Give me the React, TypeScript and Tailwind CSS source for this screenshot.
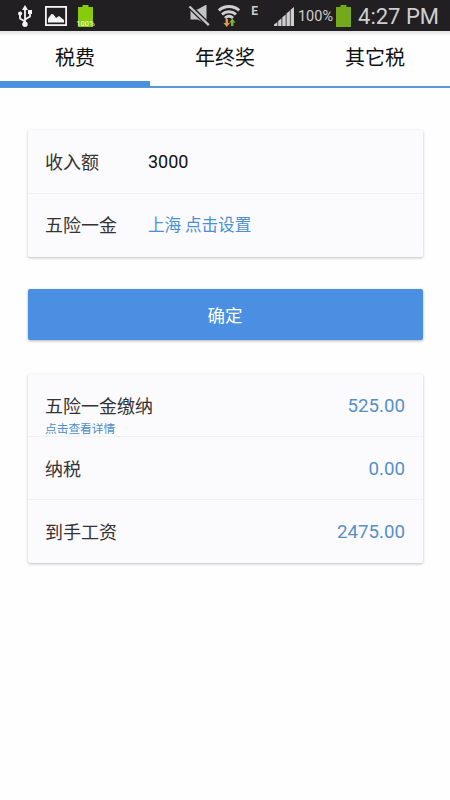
import { useState } from "react";
import clsx from "clsx";

// ─── Status bar icons ─────────────────────────────────────────────────────────

function UsbIcon() {
  return (
    <svg width="14" height="22" viewBox="0 0 14 22" fill="none" stroke="#f4f4f4" strokeWidth="1.8" aria-hidden="true">
      <path d="M7 4V18M7 16.5L2 13.5V9.5M7 14.5L12 11.5V8" />
      <path d="M7 0L10 5H4Z" fill="#f4f4f4" stroke="none" />
      <circle cx="2.1" cy="8.5" r="2.1" fill="#f4f4f4" stroke="none" />
      <path d="M10 5H14V9H10Z" fill="#f4f4f4" stroke="none" />
      <circle cx="7" cy="19.2" r="2.7" fill="#f4f4f4" stroke="none" />
    </svg>
  );
}

function PictureIcon() {
  return (
    <svg width="22" height="20" viewBox="0 0 22 20" className="block" aria-hidden="true">
      <rect x="0.9" y="0.9" width="20.2" height="18.2" fill="none" stroke="#f4f4f4" strokeWidth="1.8" />
      <path d="M3 16.5V12.5L6.5 8L8.5 8.5L11 12L14 10L19 14V16.5Z" fill="#f4f4f4" />
    </svg>
  );
}

function BatteryIcon({ className }: { className: string }) {
  return (
    <svg width="15" height="22" viewBox="0 0 15 22" className={className} fill="currentColor" aria-hidden="true">
      <path d="M4.5 0H10.5V2H15V22H0V2H4.5Z" />
    </svg>
  );
}

function MuteIcon() {
  return (
    <svg width="22" height="21" viewBox="0 0 22 21" className="block" aria-hidden="true">
      <path d="M2.5 4.5H9.5L18.5 -0.5V19L9.5 14.5H2.5Z" fill="#c4c4c4" />
      <path d="M0 -0.2L21 20.4" stroke="#211f22" strokeWidth="5" />
      <path d="M1.5 1.5L20.8 20.2" stroke="#c4c4c4" strokeWidth="2.3" />
    </svg>
  );
}

function WifiIcon() {
  return (
    <svg width="22" height="23" viewBox="0 0 22 23" className="block" fill="none" stroke="#cfcfcf" strokeWidth="2.9" aria-hidden="true">
      <path d="M0.8 5.4C6.5 0.2 15.5 0.2 21.2 5.4" />
      <path d="M4 9.4C8 5.8 14 5.8 18 9.4" />
      <path d="M7 13C9.4 10.9 12.6 10.9 15 13" />
      <path d="M7.6 14V18H5.5L8.8 22L12 18H10V14Z" fill="#e09a4c" stroke="none" />
      <path d="M13 21V17.5H11L14.3 13.5L17.5 17.5H15.4V21Z" fill="#7fb52c" stroke="none" />
    </svg>
  );
}

function SignalIcon() {
  return (
    <svg width="20" height="19" viewBox="0 0 20 19" className="block" fill="#cfcfcf" aria-hidden="true">
      <path d="M0 19V17.5L3.4 15V19Z" />
      <path d="M4.2 14L7.5 11.3V19H4.2Z" />
      <path d="M8.3 10.3L11.7 7.4V19H8.3Z" />
      <path d="M12.5 6.5L15.9 3.6V19H12.5Z" />
      <path d="M16.6 2.8L20 0V19H16.6Z" />
    </svg>
  );
}

function StatusBar() {
  return (
    <div className="flex h-[31px] items-center bg-[#211f22] pr-[11px] pl-[18px] font-['Roboto',sans-serif] whitespace-nowrap text-[#cfcfcf]">
      <UsbIcon />
      <span className="ml-[13px]">
        <PictureIcon />
      </span>
      <span className="relative ml-[11px]">
        <BatteryIcon className="text-[#86cc0c]" />
        <span className="absolute -bottom-px left-1/2 -translate-x-1/2 text-[7.5px] leading-[8px] font-medium text-[#e6f5cc]">
          100%
        </span>
      </span>

      <div className="ml-auto flex items-center">
        <MuteIcon />
        <span className="ml-2 pt-px">
          <WifiIcon />
        </span>
        <span className="ml-[11px] pb-[9px] text-[12px] leading-none font-bold">E</span>
        <span className="ml-[16px] pt-[2px]">
          <SignalIcon />
        </span>
        <span className="ml-1 pt-[3px] text-[14.5px] leading-none">100%</span>
        <BatteryIcon className="ml-[3px] text-[#73a91b]" />
        <span className="ml-[7px] pt-[3px] text-[22px] leading-none">4:27 PM</span>
      </div>
    </div>
  );
}

// ─── Tabs ─────────────────────────────────────────────────────────────────────

const tabs = ["税费", "年终奖", "其它税"];

interface TabBarProps {
  active: number;
  onChange: (index: number) => void;
}

function TabBar({ active, onChange }: TabBarProps) {
  return (
    <nav className="grid h-[57px] grid-cols-3 border-b-2 border-[#5c97d9] bg-linear-to-b from-[#e4e4e4] to-[#fefefe] to-[5px]">
      {tabs.map((tab, i) => (
        <button
          key={tab}
          type="button"
          onClick={() => onChange(i)}
          className={clsx(
            "-mb-px flex h-[56px] items-center justify-center border-b-[6px] pt-[2px] text-[20px] leading-none text-[#111]",
            i === active ? "border-[#4a8fe0]" : "border-transparent"
          )}
        >
          {tab}
        </button>
      ))}
    </nav>
  );
}

// ─── Result row ───────────────────────────────────────────────────────────────

interface ResultRowProps {
  label: string;
  value: string;
  hint?: string;
}

function ResultRow({ label, value, hint }: ResultRowProps) {
  return (
    <div className="relative flex h-[63px] items-center justify-between px-[17.5px]">
      <span className="pb-px">{label}</span>
      {hint && <span className="absolute bottom-[2px] left-[17.5px] text-[11.7px] leading-none text-[#4a90cb]">{hint}</span>}
      <span className="pt-[2px] font-['Roboto',sans-serif] text-[18.7px] text-[#5590c8]">{value}</span>
    </div>
  );
}

// ─── App ──────────────────────────────────────────────────────────────────────

export default function App() {
  const [tab, setTab] = useState(0);
  const [income, setIncome] = useState("3000");

  return (
    <div className="h-[800px] w-[450px] overflow-hidden bg-[#fefefe] font-['Noto_Sans_CJK_SC',sans-serif] text-[18px] leading-none text-[#333]">
      <StatusBar />
      <TabBar active={tab} onChange={setTab} />

      <main className="flex flex-col px-[27.5px] pt-[42px]">
        <section className="divide-y divide-[#f1f1f3] rounded-[2px] bg-[#fbfafd] shadow-[0_1px_3px_rgba(0,0,0,0.25)]">
          <label className="flex h-[64px] items-center px-[17.5px]">
            <span className="w-[103px] pb-[2px]">收入额</span>
            <input
              value={income}
              onChange={(e) => setIncome(e.target.value)}
              className="w-40 bg-transparent font-['Roboto',sans-serif] text-[18px] text-[#111] outline-none"
            />
          </label>
          <div className="flex h-[63px] items-center px-[17.5px] pb-[2px]">
            <span className="w-[103px] pb-px">五险一金</span>
            <a href="#" className="text-[16.6px] text-[#4a90d2]">上海 点击设置</a>
          </div>
        </section>

        <button
          type="button"
          className="mt-[32px] h-[51px] rounded-[2px] bg-[#4a8fe2] text-[17.5px] leading-none text-white shadow-[0_1px_3px_rgba(0,0,0,0.3)]"
        >
          确定
        </button>

        <section className="mt-[34px] divide-y divide-[#f1f1f3] rounded-[2px] bg-[#fbfafd] shadow-[0_1px_3px_rgba(0,0,0,0.25)]">
          <ResultRow label="五险一金缴纳" value="525.00" hint="点击查看详情" />
          <ResultRow label="纳税" value="0.00" />
          <ResultRow label="到手工资" value="2475.00" />
        </section>
      </main>
    </div>
  );
}
